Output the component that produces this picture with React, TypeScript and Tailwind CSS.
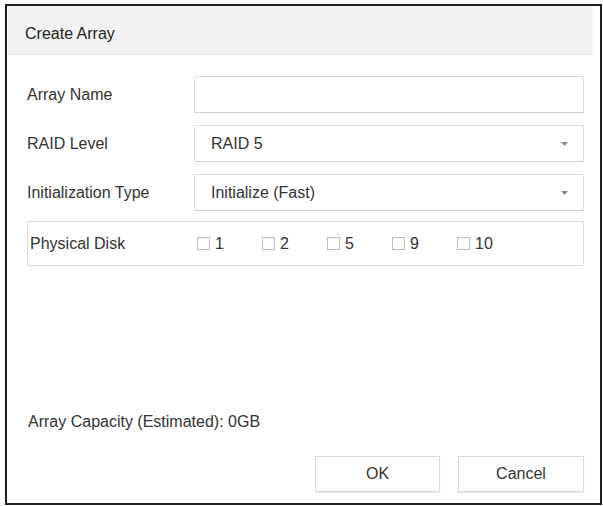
import React from 'react';

const font = { fontFamily: '"Liberation Sans", Arial, sans-serif' };

const Caret: React.FC = () => (
    <svg width="7" height="4" viewBox="0 0 7 4" className="mr-[15px]">
        <path d="M0 0 L7 0 L3.5 4 Z" fill="#8a8a8a" />
    </svg>
);

const Row: React.FC<{ label: string; children: React.ReactNode }> = ({ label, children }) => (
    <div className="flex items-center h-[37px]">
        <div className="w-[167px] shrink-0 text-[16px] text-[#333]">{label}</div>
        {children}
    </div>
);

const disks = ['1', '2', '5', '9', '10'];

const App: React.FC = () => {
    return (
        <div className="w-[603px] h-[506px] bg-white pt-[4px] pl-[5px]" style={font}>
            <div className="w-[597px] h-[501px] border-2 border-[#1f1f1f] flex flex-col bg-white">
                <div className="h-[49px] shrink-0 mr-[7px] ml-[1px] bg-[#f2f2f2] border-b border-[#e6e6e6] flex items-center pl-[17px] pt-[7px] text-[16px] text-[#222]">
                    Create Array
                </div>
                <div className="flex-1 flex flex-col pl-[20px] pr-[16px] pt-[21px] pb-[11px]">
                    <div className="flex flex-col gap-[12px]">
                        <Row label="Array Name">
                            <div className="flex-1 h-full border border-[#dcdcdc] border-b-[#d0d0d0] bg-white" />
                        </Row>
                        <Row label="RAID Level">
                            <div className="flex-1 h-full border border-[#dcdcdc] border-b-[#d0d0d0] bg-white flex items-center justify-between pl-[16px] text-[16px] text-[#333]">
                                <span>RAID 5</span>
                                <Caret />
                            </div>
                        </Row>
                        <Row label="Initialization Type">
                            <div className="flex-1 h-full border border-[#dcdcdc] border-b-[#d0d0d0] bg-white flex items-center justify-between pl-[16px] text-[16px] text-[#333]">
                                <span>Initialize (Fast)</span>
                                <Caret />
                            </div>
                        </Row>
                    </div>
                    <div className="mt-[10px] h-[45px] border border-[#dcdcdc] flex items-center pl-[2px]">
                        <div className="w-[167px] shrink-0 text-[16px] text-[#333]">Physical Disk</div>
                        <div className="flex items-center">
                            {disks.map(d => (
                                <label key={d} className="flex items-center w-[65px] text-[16px] text-[#333]">
                                    <span className="block shrink-0 w-[13px] h-[13px] border border-[#bcbcbc] bg-white mr-[5px]" />
                                    {d}
                                </label>
                            ))}
                        </div>
                    </div>
                    <div className="flex-1" />
                    <div className="text-[16px] text-[#333] pl-[1px] leading-[20px]">Array Capacity (Estimated): 0GB</div>
                    <div className="mt-[24px] flex justify-end gap-[18px]">
                        <button className="w-[125px] h-[36px] border border-[#d9d9d9] bg-white text-[16px] text-[#333] shadow-[0_1px_1px_rgba(0,0,0,0.08)]">OK</button>
                        <button className="w-[126px] h-[36px] border border-[#d9d9d9] bg-white text-[16px] text-[#333] shadow-[0_1px_1px_rgba(0,0,0,0.08)]">Cancel</button>
                    </div>
                </div>
            </div>
        </div>
    );
};

export default App;
